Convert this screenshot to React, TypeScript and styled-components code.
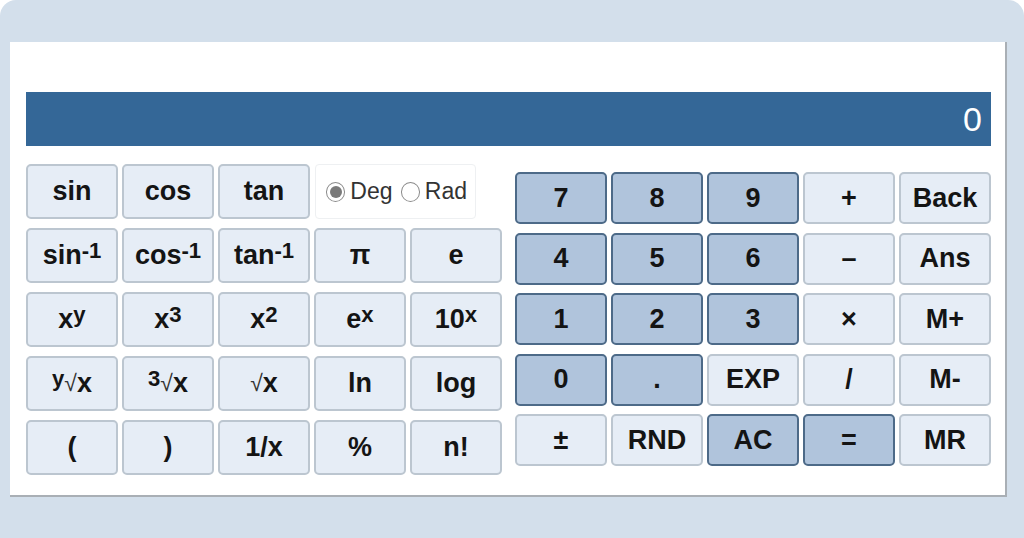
import styled, { createGlobalStyle, css } from "styled-components";

const GlobalStyle = createGlobalStyle`
  html, body {
    margin: 0;
    padding: 0;
    background: #ffffff;
  }
  body {
    font-family: "Liberation Sans", Arial, sans-serif;
  }
`;

const Frame = styled.div`
  width: 1024px;
  height: 538px;
  box-sizing: border-box;
  background: #d3dfeb;
  border-radius: 16px 16px 0 0;
  padding: 42px 17px 0 10px;
`;

const Panel = styled.div`
  background: #ffffff;
  border-right: 2px solid #a9afb5;
  border-bottom: 2px solid #a9afb5;
  box-sizing: border-box;
  height: 455px;
  padding: 50px 14px 0 16px;
`;

const Display = styled.div`
  height: 54px;
  background: #346797;
  color: #ffffff;
  font-size: 34px;
  display: flex;
  align-items: center;
  justify-content: flex-end;
  padding-right: 9px;
`;

const Keypad = styled.div`
  display: flex;
  gap: 13px;
  margin-top: 18px;
`;

const Grid = styled.div<{ $rowH: number; $rowGap: number; $top?: number }>`
  display: grid;
  grid-template-columns: repeat(5, 92px);
  grid-auto-rows: ${(p) => p.$rowH}px;
  column-gap: 4px;
  row-gap: ${(p) => p.$rowGap}px;
  margin-top: ${(p) => p.$top ?? 0}px;
`;

const Key = styled.button<{ $dark?: boolean }>`
  font-family: "Liberation Sans", Arial, sans-serif;
  font-weight: bold;
  font-size: 27px;
  color: #141414;
  border-radius: 5px;
  padding: 0;
  display: flex;
  align-items: center;
  justify-content: center;
  cursor: pointer;
  ${(p) =>
    p.$dark
      ? css`
          background: #b0c4dc;
          border: 2px solid #4d6a88;
        `
      : css`
          background: #e6edf6;
          border: 2px solid #bcc6d0;
        `}

  sup {
    font-size: 0.82em;
    position: relative;
    top: -0.2em;
  }
`;

const Root = styled.span`
  font-weight: normal;
  font-size: 0.85em;
  color: #333;
`;

const ModeBox = styled.div`
  grid-column: span 2;
  width: 161px;
  box-sizing: border-box;
  margin-left: 1px;
  border: 1px solid #eef0f2;
  border-radius: 4px;
  display: flex;
  align-items: center;
  padding-left: 10px;
  font-size: 23px;
  color: #333;
`;

const Radio = styled.span<{ $on?: boolean }>`
  width: 20px;
  height: 20px;
  box-sizing: border-box;
  border-radius: 50%;
  border: 1px solid #8a8a8a;
  display: inline-flex;
  align-items: center;
  justify-content: center;
  margin-right: 5px;
  background: #fff;

  &::after {
    content: "";
    width: 12px;
    height: 12px;
    border-radius: 50%;
    background: ${(p) => (p.$on ? "#7a7a7a" : "transparent")};
  }
`;

const Label = styled.span`
  margin-right: 8px;
`;

export default function App() {
  return (
    <>
      <GlobalStyle />
      <Frame>
        <Panel>
          <Display>0</Display>
          <Keypad>
            <Grid $rowH={55} $rowGap={9}>
              <Key>sin</Key>
              <Key>cos</Key>
              <Key>tan</Key>
              <ModeBox>
                <Radio $on />
                <Label>Deg</Label>
                <Radio />
                <Label>Rad</Label>
              </ModeBox>
              <Key>
                sin<sup>-1</sup>
              </Key>
              <Key>
                cos<sup>-1</sup>
              </Key>
              <Key>
                tan<sup>-1</sup>
              </Key>
              <Key>π</Key>
              <Key>e</Key>
              <Key>
                x<sup>y</sup>
              </Key>
              <Key>
                x<sup>3</sup>
              </Key>
              <Key>
                x<sup>2</sup>
              </Key>
              <Key>
                e<sup>x</sup>
              </Key>
              <Key>
                10<sup>x</sup>
              </Key>
              <Key>
                <sup>y</sup>
                <Root>√</Root>x
              </Key>
              <Key>
                <sup>3</sup>
                <Root>√</Root>x
              </Key>
              <Key>
                <Root>√</Root>x
              </Key>
              <Key>ln</Key>
              <Key>log</Key>
              <Key>(</Key>
              <Key>)</Key>
              <Key>1/x</Key>
              <Key>%</Key>
              <Key>n!</Key>
            </Grid>
            <Grid $rowH={52} $rowGap={8.5} $top={8}>
              <Key $dark>7</Key>
              <Key $dark>8</Key>
              <Key $dark>9</Key>
              <Key>+</Key>
              <Key>Back</Key>
              <Key $dark>4</Key>
              <Key $dark>5</Key>
              <Key $dark>6</Key>
              <Key>–</Key>
              <Key>Ans</Key>
              <Key $dark>1</Key>
              <Key $dark>2</Key>
              <Key $dark>3</Key>
              <Key>×</Key>
              <Key>M+</Key>
              <Key $dark>0</Key>
              <Key $dark>.</Key>
              <Key>EXP</Key>
              <Key>/</Key>
              <Key>M-</Key>
              <Key>±</Key>
              <Key>RND</Key>
              <Key $dark>AC</Key>
              <Key $dark>=</Key>
              <Key>MR</Key>
            </Grid>
          </Keypad>
        </Panel>
      </Frame>
    </>
  );
}
